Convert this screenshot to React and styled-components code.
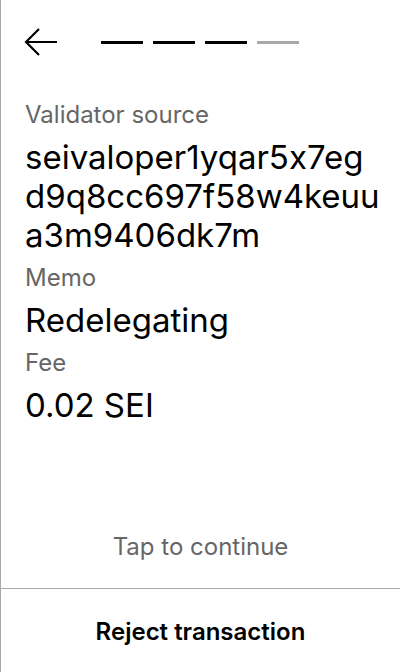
import React from "react";
import styled, { createGlobalStyle } from "styled-components";

const GlobalStyle = createGlobalStyle`
  html, body {
    margin: 0;
    padding: 0;
    background: #fff;
  }
  body {
    font-family: Inter, "Liberation Sans", sans-serif;
    font-feature-settings: "calt" 0;
    color: #000;
  }
`;

const Screen = styled.div`
  height: 672px;
  box-sizing: border-box;
  border-left: 1px solid #a8a8a8;
  display: flex;
  flex-direction: column;
`;

const Header = styled.div`
  height: 84px;
  padding: 0 23px;
  display: flex;
  align-items: center;
  gap: 44px;
`;

const BackButton = styled.button`
  border: none;
  background: none;
  padding: 0;
  width: 33px;
  height: 28px;
  display: flex;
  cursor: pointer;
`;

const Steps = styled.div`
  display: flex;
  gap: 10px;
`;

const Step = styled.div`
  width: 42px;
  height: 3px;
  background: ${props => (props.done ? "#000" : "#a8a8a8")};
`;

const Content = styled.div`
  flex: 1;
  padding: 17px 24px 0;
  display: flex;
  flex-direction: column;
  gap: 9px;
`;

const Label = styled.div`
  font-size: 24px;
  line-height: 28px;
  color: #666;
`;

const Value = styled.div`
  margin-right: -5px;
  font-size: 33px;
  line-height: 39px;
  word-break: break-all;
`;

const TapHint = styled.div`
  margin-top: auto;
  padding-bottom: 27px;
  text-align: center;
  font-size: 24px;
  line-height: 28px;
  color: #666;
`;

const Footer = styled.button`
  height: 84px;
  border: none;
  border-top: 1px solid #a8a8a8;
  padding-top: 3px;
  background: none;
  font-family: Inter, "Liberation Sans", sans-serif;
  font-feature-settings: "calt" 0;
  font-size: 24px;
  font-weight: 600;
  color: #000;
  cursor: pointer;
`;

const fields = [
  { label: "Validator source", value: "seivaloper1yqar5x7egd9q8cc697f58w4keuua3m9406dk7m" },
  { label: "Memo", value: "Redelegating" },
  { label: "Fee", value: "0.02 SEI" }
];

export default function App() {
  return (
    <>
      <GlobalStyle />
      <Screen>
        <Header>
          <BackButton aria-label="Back">
            <svg width="33" height="28" viewBox="0 0 33 28" fill="none">
              <path d="M2 14H33M15 1L2 14L15 27" stroke="#000" strokeWidth="2.2" />
            </svg>
          </BackButton>
          <Steps>
            <Step done />
            <Step done />
            <Step done />
            <Step />
          </Steps>
        </Header>
        <Content>
          {fields.map(f => (
            <React.Fragment key={f.label}>
              <Label>{f.label}</Label>
              <Value>{f.value}</Value>
            </React.Fragment>
          ))}
          <TapHint>Tap to continue</TapHint>
        </Content>
        <Footer>Reject transaction</Footer>
      </Screen>
    </>
  );
}
